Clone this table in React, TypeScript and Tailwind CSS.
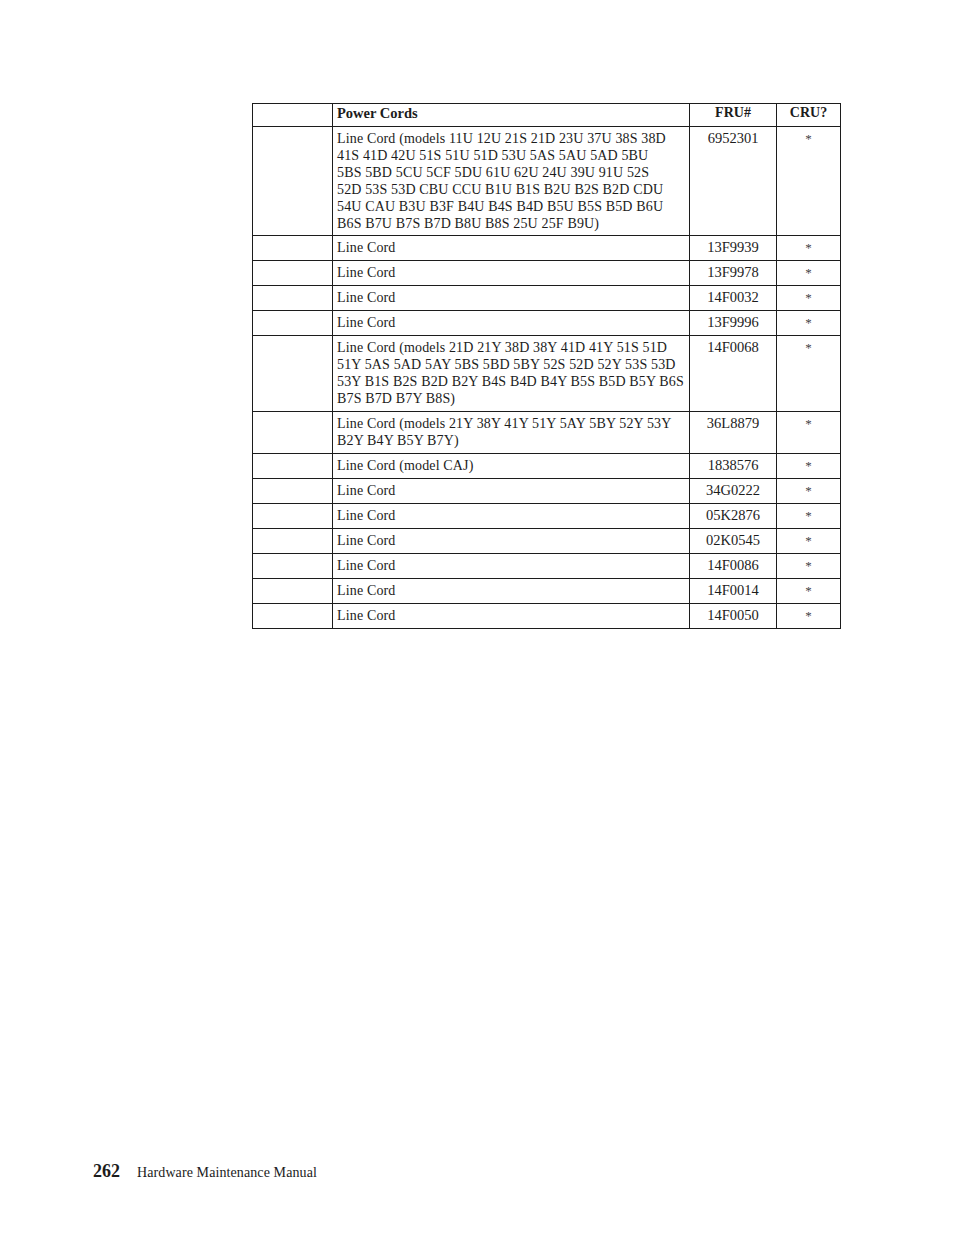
import React from "react";

const rows: { desc: string[]; fru: string }[] = [
  {
    desc: [
      "Line Cord (models 11U 12U 21S 21D 23U 37U 38S 38D",
      "41S 41D 42U 51S 51U 51D 53U 5AS 5AU 5AD 5BU",
      "5BS 5BD 5CU 5CF 5DU 61U 62U 24U 39U 91U 52S",
      "52D 53S 53D CBU CCU B1U B1S B2U B2S B2D CDU",
      "54U CAU B3U B3F B4U B4S B4D B5U B5S B5D B6U",
      "B6S B7U B7S B7D B8U B8S 25U 25F B9U)",
    ],
    fru: "6952301",
  },
  { desc: ["Line Cord"], fru: "13F9939" },
  { desc: ["Line Cord"], fru: "13F9978" },
  { desc: ["Line Cord"], fru: "14F0032" },
  { desc: ["Line Cord"], fru: "13F9996" },
  {
    desc: [
      "Line Cord (models 21D 21Y 38D 38Y 41D 41Y 51S 51D",
      "51Y 5AS 5AD 5AY 5BS 5BD 5BY 52S 52D 52Y 53S 53D",
      "53Y B1S B2S B2D B2Y B4S B4D B4Y B5S B5D B5Y B6S",
      "B7S B7D B7Y B8S)",
    ],
    fru: "14F0068",
  },
  {
    desc: [
      "Line Cord (models 21Y 38Y 41Y 51Y 5AY 5BY 52Y 53Y",
      "B2Y B4Y B5Y B7Y)",
    ],
    fru: "36L8879",
  },
  { desc: ["Line Cord (model CAJ)"], fru: "1838576" },
  { desc: ["Line Cord"], fru: "34G0222" },
  { desc: ["Line Cord"], fru: "05K2876" },
  { desc: ["Line Cord"], fru: "02K0545" },
  { desc: ["Line Cord"], fru: "14F0086" },
  { desc: ["Line Cord"], fru: "14F0014" },
  { desc: ["Line Cord"], fru: "14F0050" },
];

export default function App() {
  return (
    <div
      className="relative w-[954px] min-h-[1235px] bg-white text-[#1c1c1c]"
      style={{ fontFamily: '"Liberation Serif", "Times New Roman", serif' }}
    >
      <div className="pt-[103px] pl-[252px]">
        <table className="border-collapse table-fixed w-[588px]">
          <colgroup>
            <col className="w-[80px]" />
            <col className="w-[357px]" />
            <col className="w-[87px]" />
            <col className="w-[64px]" />
          </colgroup>
          <thead>
            <tr className="h-[23px]">
              <th className="border border-[#1c1c1c] p-0"></th>
              <th className="border border-[#1c1c1c] align-top px-[4px] pt-0 pb-[4px] text-left font-bold text-[14.5px] leading-[18px]">
                Power Cords
              </th>
              <th className="border border-[#1c1c1c] align-top px-[4px] pt-0 pb-[4px] text-center font-bold text-[14px] leading-[18px]">
                FRU#
              </th>
              <th className="border border-[#1c1c1c] align-top px-[4px] pt-0 pb-[4px] text-center font-bold text-[14px] leading-[18px]">
                CRU?
              </th>
            </tr>
          </thead>
          <tbody>
            {rows.map((r, i) => (
              <tr key={i}>
                <td className="border border-[#1c1c1c] p-0"></td>
                <td
                  className={
                    i === 0
                      ? "border border-[#1c1c1c] align-top pl-[4px] pr-[2px] pt-[3px] pb-[3px] text-[14px] leading-[17px] tracking-[0.15px]"
                      : "border border-[#1c1c1c] align-top pl-[4px] pr-[2px] pt-[3px] pb-[4px] text-[14px] leading-[17px] tracking-[0.15px]"
                  }
                >
                  {r.desc.map((l, j) => (
                    <div key={j} className="whitespace-nowrap">
                      {l}
                    </div>
                  ))}
                </td>
                <td className="border border-[#1c1c1c] align-top text-center pt-[3px] pb-[3px] text-[14.5px] leading-[17px]">
                  {r.fru}
                </td>
                <td className="border border-[#1c1c1c] align-top text-center pt-[3px] pb-[3px] text-[13px] leading-[17px] text-[#444]">
                  *
                </td>
              </tr>
            ))}
          </tbody>
        </table>
      </div>
      <div className="absolute left-[93px] top-[1160px] flex items-baseline gap-[17px]">
        <span className="font-bold text-[18px] leading-[22px]">262</span>
        <span className="text-[14px] leading-[22px] tracking-[0.1px]">Hardware Maintenance Manual</span>
      </div>
    </div>
  );
}
